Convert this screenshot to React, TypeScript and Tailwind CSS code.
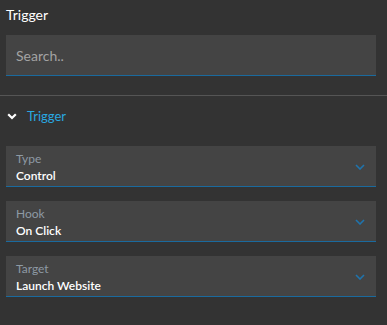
const fields = [
    { label: 'Type', value: 'Control' },
    { label: 'Hook', value: 'On Click' },
    { label: 'Target', value: 'Launch Website' },
];

function SelectField({ label, value }: { label: string; value: string }) {
    return (
        <div className="flex h-[41px] items-center justify-between border-b border-[#1a6a9e] bg-[#444444] pl-[10px] pr-[11px]">
            <div className="flex flex-col pt-[3px] leading-none">
                <span className="text-[12px] text-[#8e9aa4]">{label}</span>
                <span className="mt-[5px] text-[12px] font-semibold text-white">{value}</span>
            </div>
            <svg width="10" height="6" viewBox="0 0 10 6" className="mt-[3px]">
                <path d="M1 1l4 4 4-4" fill="none" stroke="#1f74ad" strokeWidth="1.6" />
            </svg>
        </div>
    );
}

export default function App() {
    return (
        <div className="h-[325px] w-[387px] bg-[#333333] font-['Lato',sans-serif]">
            <div className="pl-[6px] pr-[11px] pt-[5px]">
                <h2 className="text-[14px] leading-[20px] text-white">Trigger</h2>
                <div className="mt-[10px] flex h-[41px] items-center border-b border-[#1a6a9e] bg-[#444444] px-[10px]">
                    <span className="text-[14px] text-[#a3a3a3]">Search..</span>
                </div>
            </div>
            <div className="mt-[19px] h-px bg-[#555555]" />
            <div className="flex items-center gap-[10px] pl-[7px] pt-[11px]">
                <svg width="10" height="7" viewBox="0 0 10 7">
                    <path d="M1.2 1.2l3.8 3.8 3.8-3.8" fill="none" stroke="#ffffff" strokeWidth="2.2" />
                </svg>
                <span className="text-[13px] text-[#29a8e0]">Trigger</span>
            </div>
            <div className="mt-[19px] flex flex-col gap-[14px] pl-[6px] pr-[11px]">
                {fields.map((f) => (
                    <SelectField key={f.label} label={f.label} value={f.value} />
                ))}
            </div>
        </div>
    );
}
